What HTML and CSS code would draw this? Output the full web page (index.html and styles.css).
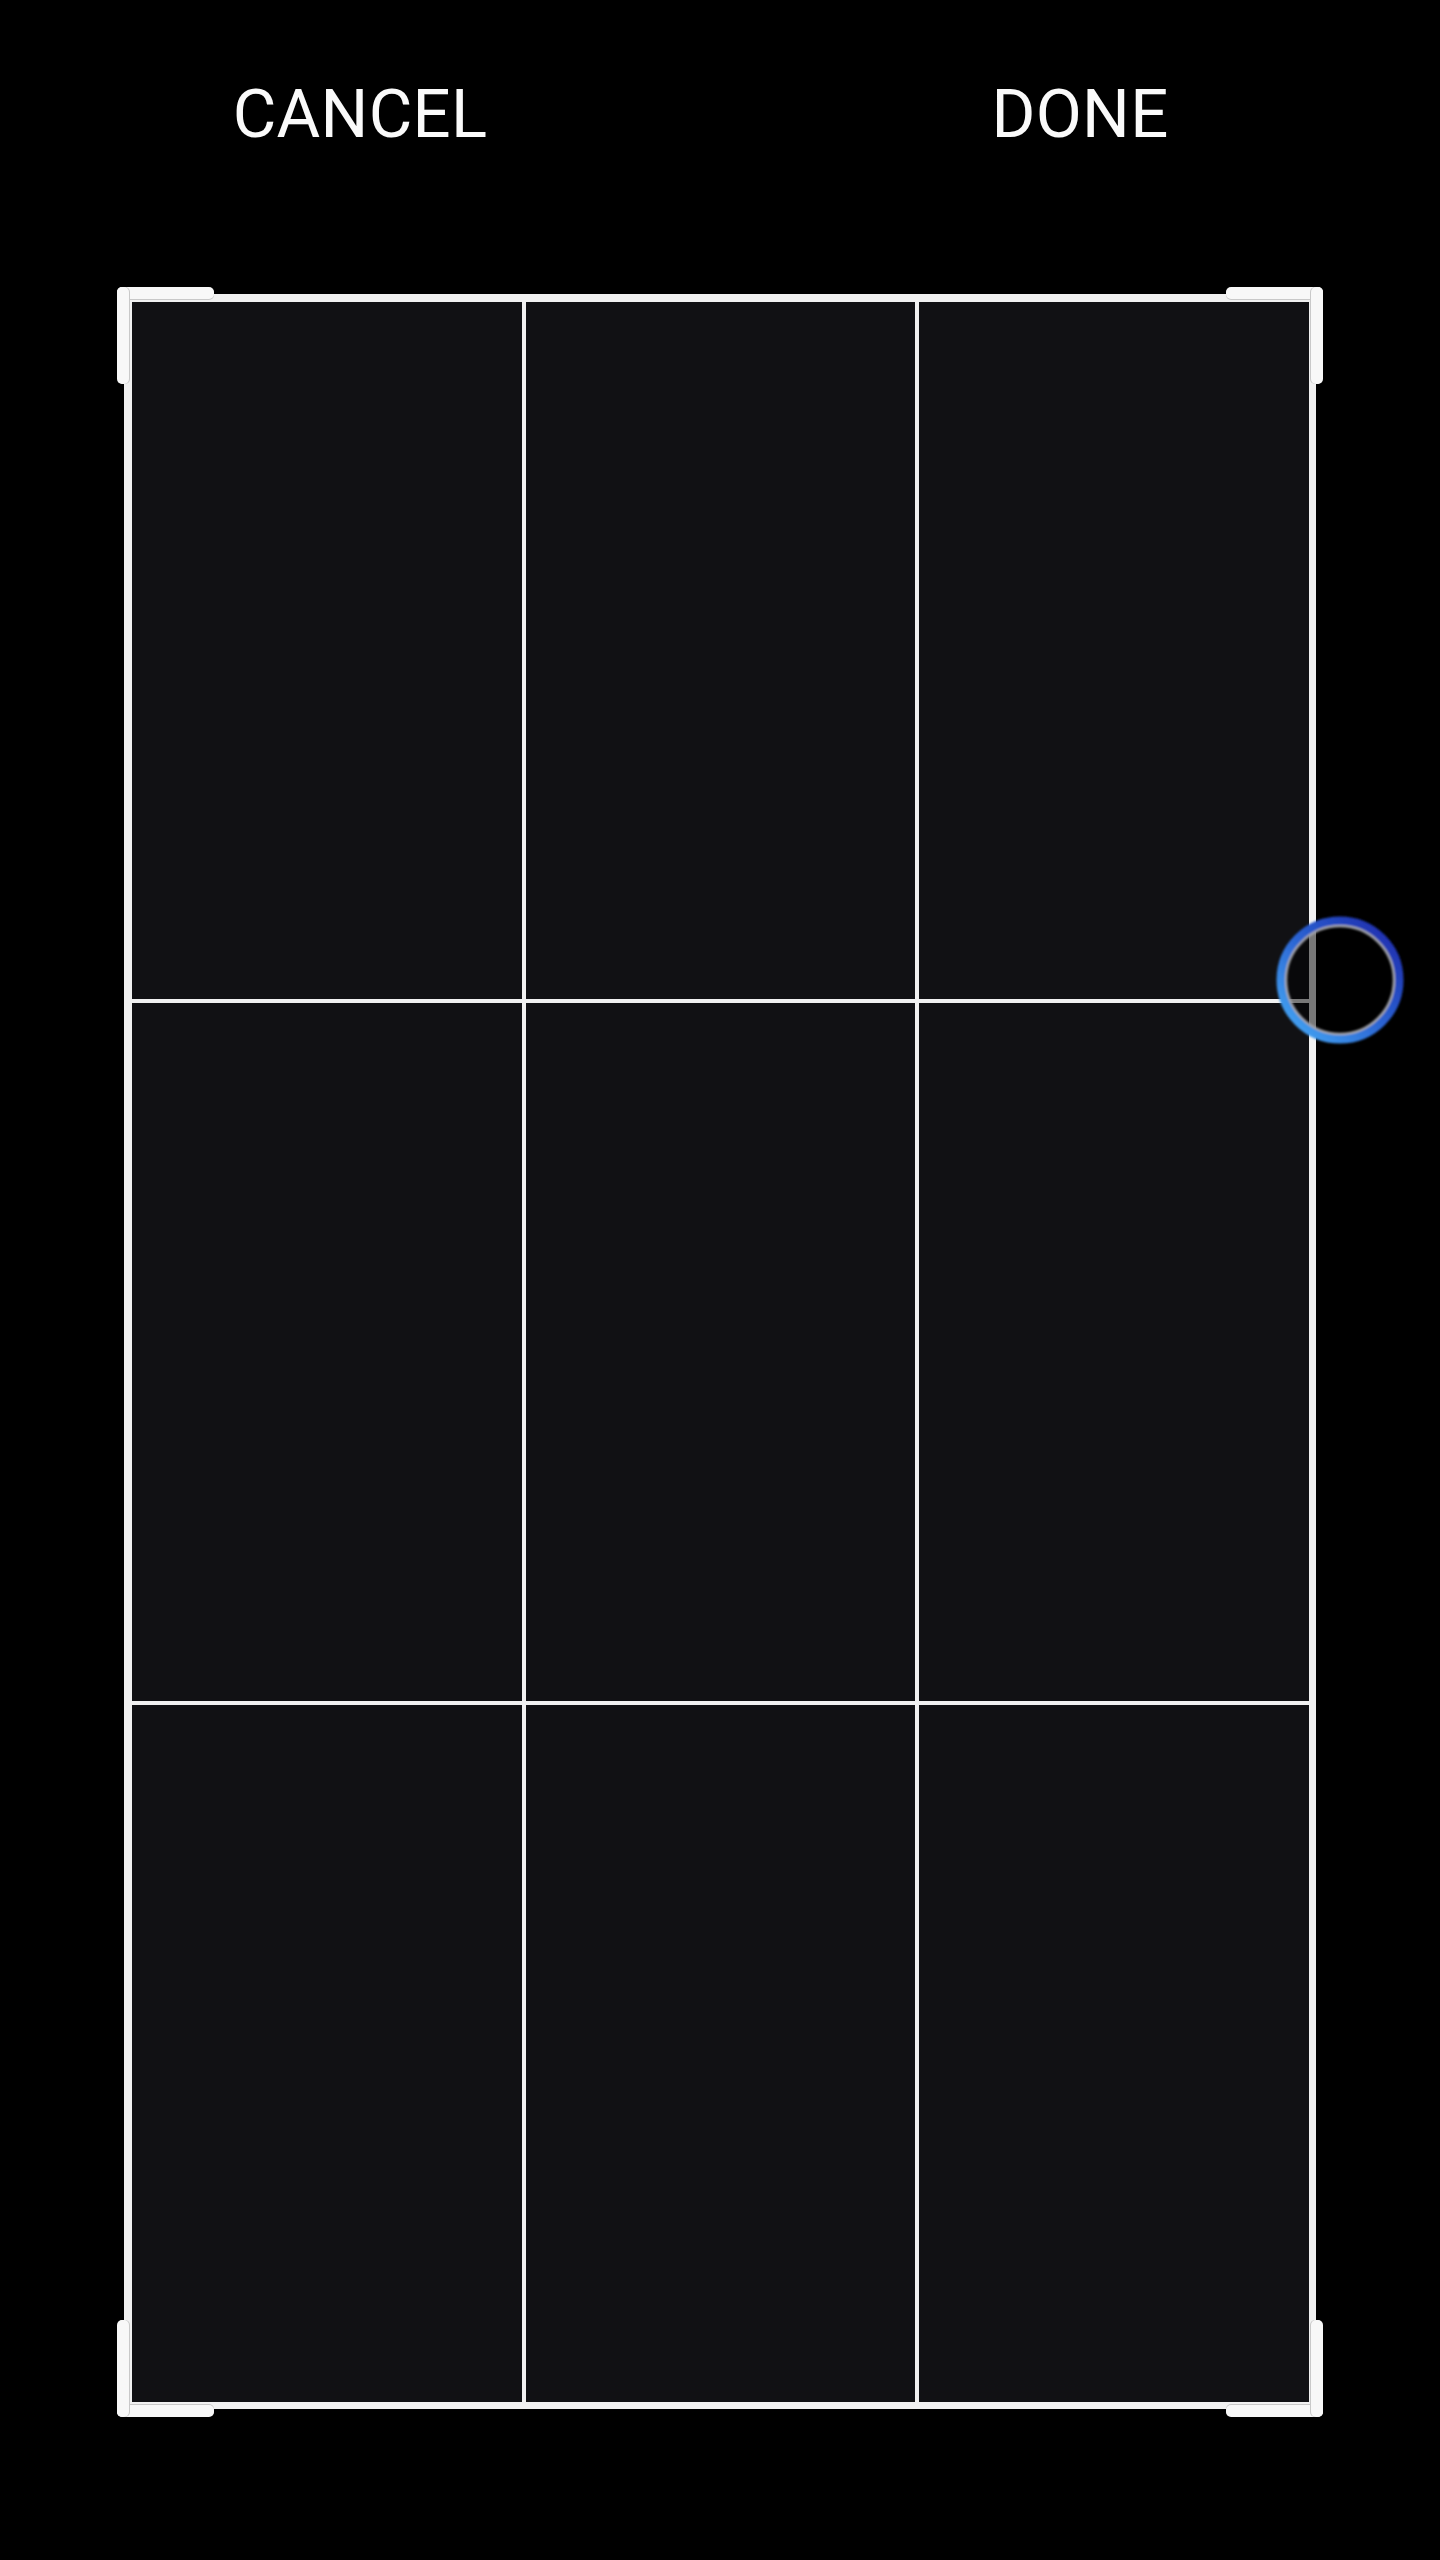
FILE: index.html
```html
<!DOCTYPE html>
<html>
<head>
<meta charset="utf-8">
<link rel="stylesheet" href="styles.css">
</head>
<body>
<header class="bar">
  <div class="btn">CANCEL</div>
  <div class="btn">DONE</div>
</header>
<main class="stage">
  <div class="frame">
    <div class="grid">
      <div class="cell"></div><div class="cell"></div><div class="cell"></div>
      <div class="cell"></div><div class="cell"></div><div class="cell"></div>
      <div class="cell"></div><div class="cell"></div><div class="cell"></div>
    </div>
    <span class="corner tl"></span>
    <span class="corner tr"></span>
    <span class="corner bl"></span>
    <span class="corner br"></span>
    <svg class="handle" width="140" height="140" viewBox="0 0 140 140">
      <defs>
        <linearGradient id="ring" x1="1" y1="0" x2="0" y2="1">
          <stop offset="0" stop-color="#1c25a8"/>
          <stop offset="0.5" stop-color="#2a62d2"/>
          <stop offset="1" stop-color="#47aef7"/>
        </linearGradient>
        <filter id="soft" x="-10%" y="-10%" width="120%" height="120%">
          <feGaussianBlur stdDeviation="1"/>
        </filter>
      </defs>
      <circle cx="70" cy="70" r="60" fill="rgba(0,0,0,0.5)"/>
      <g filter="url(#soft)">
        <circle cx="70" cy="70" r="59" fill="none" stroke="url(#ring)" stroke-width="9"/>
        <circle cx="70" cy="70" r="54" fill="none" stroke="#a2a4ab" stroke-width="2.5"/>
      </g>
    </svg>
  </div>
</main>
</body>
</html>
```

FILE: styles.css
```css
html, body {
  margin: 0;
  padding: 0;
  background: #000;
}
body {
  width: 1440px;
  height: 2560px;
  font-family: Roboto, "Liberation Sans", sans-serif;
}
.bar {
  display: flex;
  padding-top: 81px;
}
.btn {
  flex: 1;
  text-align: center;
  color: #fafafa;
  font-size: 67px;
  line-height: 67px;
  letter-spacing: 0.3px;
}
.stage {
  padding-top: 146px;
}
.frame {
  position: relative;
  width: 1177px;
  margin: 0 auto;
  border-style: solid;
  border-color: #f1f1f1;
  border-width: 8px 7px 7px 8px;
}
.grid {
  display: grid;
  grid-template-columns: 1fr 1fr 1fr;
  grid-template-rows: repeat(3, 697.33px);
  gap: 4px;
  background: #f1f1f1;
}
.cell {
  background: #111114;
}
.corner {
  position: absolute;
  width: 97px;
  height: 97px;
}
.corner::before,
.corner::after {
  content: "";
  position: absolute;
  background: #f8f8f8;
  border-radius: 5px;
}
.corner::before {
  left: 0;
  right: 0;
  height: 12px;
}
.corner::after {
  top: 0;
  bottom: 0;
  width: 12px;
}
.tl { left: -15px; top: -15px; }
.tr { right: -14px; top: -15px; }
.bl { left: -15px; bottom: -15px; }
.br { right: -14px; bottom: -15px; }
.tl::before, .tr::before { top: 0; box-shadow: 0 1px 0 #c9c9c9; }
.bl::before, .br::before { bottom: 0; box-shadow: 0 -1px 0 #c9c9c9; }
.tl::after, .bl::after { left: 0; box-shadow: 1px 0 0 #c9c9c9; }
.tr::after, .br::after { right: 0; box-shadow: -1px 0 0 #c9c9c9; }
.handle {
  position: absolute;
  left: 1138px;
  top: 608px;
}
```
